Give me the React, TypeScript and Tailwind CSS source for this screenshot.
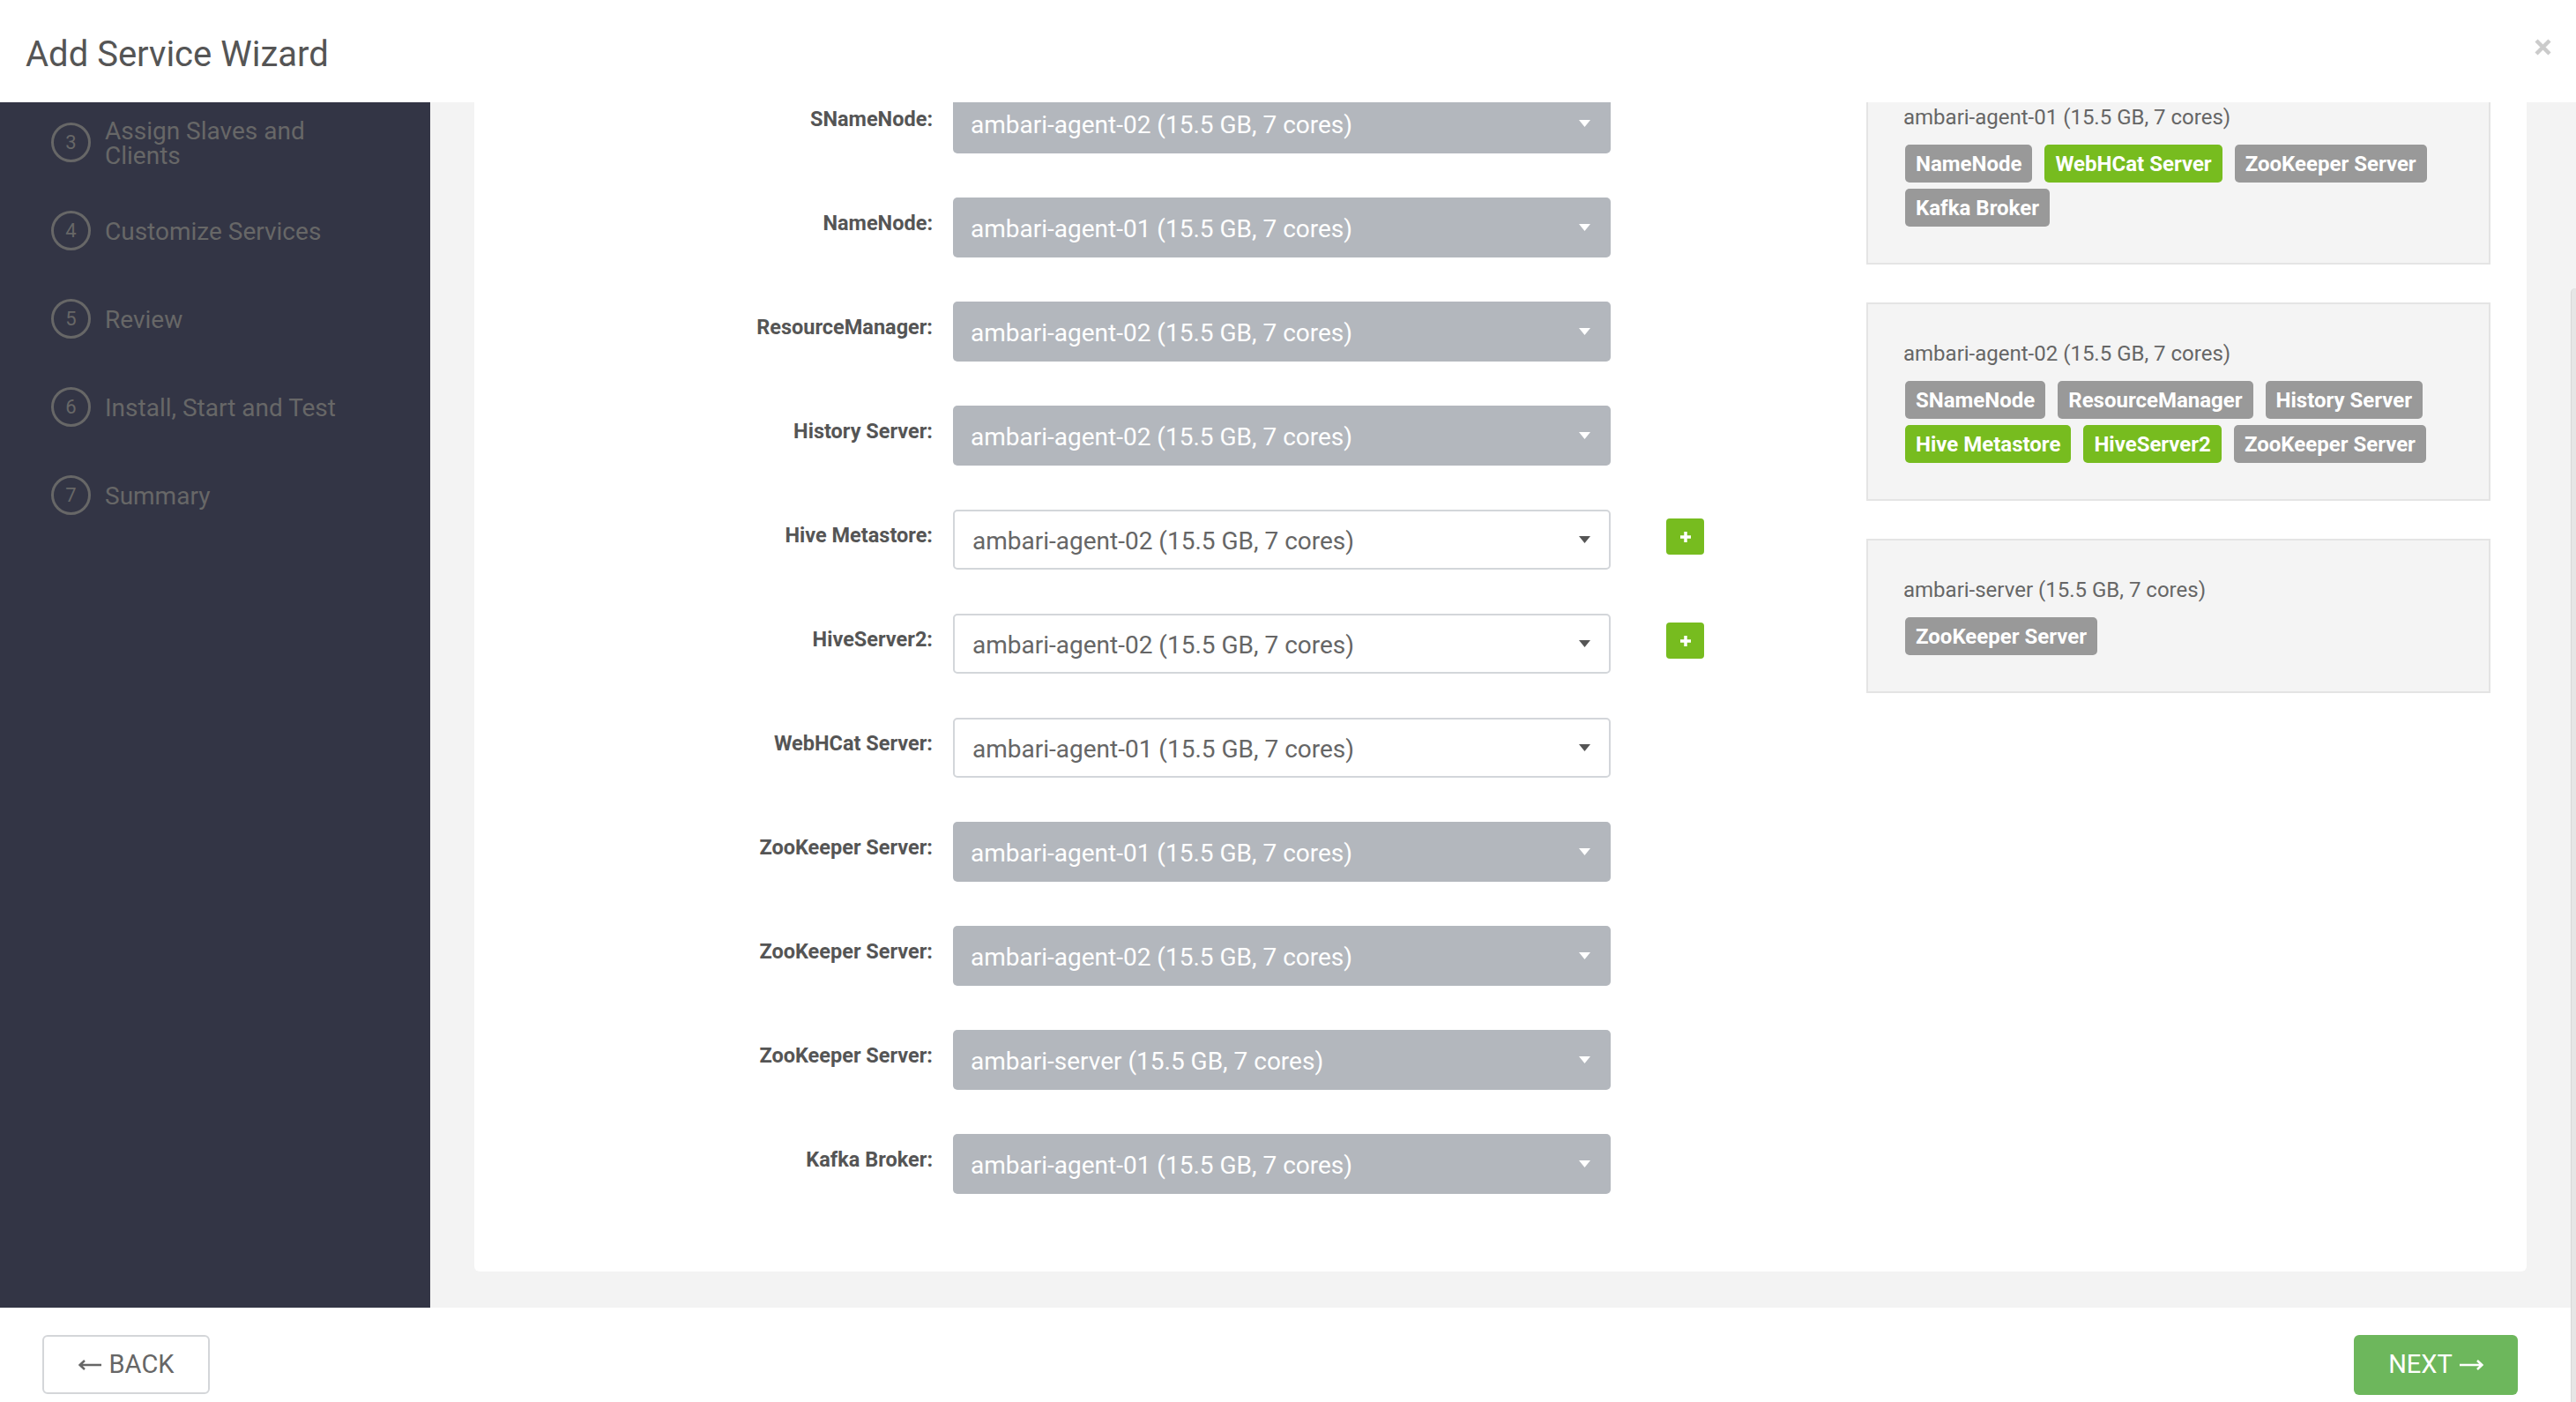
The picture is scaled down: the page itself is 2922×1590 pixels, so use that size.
import React from 'react';

type Row = { label: string; host: string; locked: boolean; plus?: boolean };

const rows: Row[] = [
  { label: 'SNameNode:', host: 'ambari-agent-02', locked: true },
  { label: 'NameNode:', host: 'ambari-agent-01', locked: true },
  { label: 'ResourceManager:', host: 'ambari-agent-02', locked: true },
  { label: 'History Server:', host: 'ambari-agent-02', locked: true },
  { label: 'Hive Metastore:', host: 'ambari-agent-02', locked: false, plus: true },
  { label: 'HiveServer2:', host: 'ambari-agent-02', locked: false, plus: true },
  { label: 'WebHCat Server:', host: 'ambari-agent-01', locked: false },
  { label: 'ZooKeeper Server:', host: 'ambari-agent-01', locked: true },
  { label: 'ZooKeeper Server:', host: 'ambari-agent-02', locked: true },
  { label: 'ZooKeeper Server:', host: 'ambari-server', locked: true },
  { label: 'Kafka Broker:', host: 'ambari-agent-01', locked: true },
];

type Badge = { name: string; isNew?: boolean };

const hosts: { name: string; rows: Badge[][] }[] = [
  {
    name: 'ambari-agent-01',
    rows: [
      [{ name: 'NameNode' }, { name: 'WebHCat Server', isNew: true }, { name: 'ZooKeeper Server' }],
      [{ name: 'Kafka Broker' }],
    ],
  },
  {
    name: 'ambari-agent-02',
    rows: [
      [{ name: 'SNameNode' }, { name: 'ResourceManager' }, { name: 'History Server' }],
      [{ name: 'Hive Metastore', isNew: true }, { name: 'HiveServer2', isNew: true }, { name: 'ZooKeeper Server' }],
    ],
  },
  {
    name: 'ambari-server',
    rows: [[{ name: 'ZooKeeper Server' }]],
  },
];

const steps = [
  { n: 3, text: ['Assign Slaves and', 'Clients'] },
  { n: 4, text: ['Customize Services'] },
  { n: 5, text: ['Review'] },
  { n: 6, text: ['Install, Start and Test'] },
  { n: 7, text: ['Summary'] },
];

const Caret = ({ color }: { color: string }) => (
  <svg width="13" height="8" viewBox="0 0 13 8">
    <path d="M0 0 L13 0 L6.5 8 Z" fill={color} />
  </svg>
);

const HostSelect = ({ row }: { row: Row }) => {
  const text = `${row.host} (15.5 GB, 7 cores)`;
  if (row.locked) {
    return (
      <div className="w-[746px] h-[68px] rounded-[5px] bg-[#b3b7bd] flex items-center justify-between pl-[20px] pr-[23px]">
        <span className="text-[28px] text-white pt-[3px]">{text}</span>
        <Caret color="#ffffff" />
      </div>
    );
  }
  return (
    <div className="w-[746px] h-[68px] rounded-[5px] bg-white border-2 border-[#d3d6da] flex items-center justify-between pl-[20px] pr-[21px]">
      <span className="text-[28px] text-[#666666] pt-[4px]">{text}</span>
      <Caret color="#555555" />
    </div>
  );
};

const App = () => {
  return (
    <div className="w-[2922px] h-[1590px] bg-white relative overflow-hidden font-['Roboto','Liberation_Sans',sans-serif]">
      <header className="h-[116px] flex justify-between pl-[29px] pr-[28px]">
        <h1 className="pt-[38px] text-[40px] leading-[47px] text-[#555555]">Add Service Wizard</h1>
        <svg className="mt-[44px]" width="19" height="19" viewBox="0 0 19 19">
          <path d="M2 2 L17 17 M17 2 L2 17" stroke="#cbcbcb" strokeWidth="4.5" />
        </svg>
      </header>

      <div className="flex h-[1367px]">
        <aside className="w-[488px] shrink-0 bg-[#333545] overflow-hidden">
          <div className="-mt-[5px] flex flex-col">
            {steps.map(s => (
              <div key={s.n} className="h-[100px] flex items-center pl-[58px] gap-[16px]">
                <div className="w-[45px] h-[45px] shrink-0 rounded-full border-[3px] border-[#676767] flex items-center justify-center text-[22px] text-[#676767]">
                  {s.n}
                </div>
                <div className="w-[320px] text-[28px] leading-[28px] text-[#676767] pt-[3px]">
                  {s.text.map(t => (
                    <div key={t}>{t}</div>
                  ))}
                </div>
              </div>
            ))}
          </div>
        </aside>

        <main className="flex-1 bg-[#f3f3f3] pl-[50px] pr-[56px] pb-[41px]">
          <div className="h-full bg-white rounded-b-[6px] overflow-hidden">
            <div className="-mt-[41px] flex">
              <div className="pt-[31px] flex flex-col gap-[50px]">
                {rows.map((row, i) => (
                  <div key={i} className="flex items-start h-[68px]">
                    <div className="w-[520px] text-right pt-[15px] text-[23.5px] leading-[28px] font-bold text-[#555555]">
                      {row.label}
                    </div>
                    <div className="ml-[23px]">
                      <HostSelect row={row} />
                    </div>
                    {row.plus && (
                      <div className="ml-[63px] mt-[10px] w-[43px] h-[41px] rounded-[4px] bg-[#77bc1f] flex items-center justify-center">
                        <svg width="12" height="12" viewBox="0 0 12 12">
                          <path d="M6 0 V12 M0 6 H12" stroke="#ffffff" strokeWidth="3.5" />
                        </svg>
                      </div>
                    )}
                  </div>
                ))}
              </div>

              <div className="ml-auto mr-[41px] w-[708px] flex flex-col gap-[43px]">
                {hosts.map(h => (
                  <div key={h.name} className="border-2 border-[#e4e4e4] bg-[#f4f4f4] pt-[42px] pb-[41px] pl-[40px]">
                    <div className="text-[24px] leading-[28px] text-[#666666]">{h.name} (15.5 GB, 7 cores)</div>
                    <div className="mt-[17px] flex flex-col gap-[7px] pl-[2px]">
                      {h.rows.map((r, ri) => (
                        <div key={ri} className="flex gap-[14px]">
                          {r.map(b => (
                            <span
                              key={b.name}
                              className={
                                b.isNew
                                  ? 'h-[43px] px-[12px] rounded-[5px] bg-[#77bc1f] text-white text-[24px] font-bold flex items-center'
                                  : 'h-[43px] px-[12px] rounded-[5px] bg-[#999999] text-white text-[24px] font-bold flex items-center'
                              }
                            >
                              {b.name}
                            </span>
                          ))}
                        </div>
                      ))}
                    </div>
                  </div>
                ))}
              </div>
            </div>
          </div>
        </main>
      </div>

      <footer className="h-[107px] flex items-start justify-between pt-[31px] pl-[48px] pr-[66px]">
        <button className="w-[190px] h-[67px] border-2 border-[#d4d6d9] rounded-[6px] flex items-center justify-center gap-[9px] text-[29px] text-[#666666]">
          <svg width="26" height="12" viewBox="0 0 26 12">
            <path d="M26 6 H2 M7 1 L1.5 6 L7 11" stroke="#666666" strokeWidth="2.5" fill="none" />
          </svg>
          BACK
        </button>
        <button className="w-[186px] h-[68px] bg-[#6db75c] rounded-[6px] flex items-center justify-center gap-[8px] text-[29px] text-white">
          NEXT
          <svg width="27" height="12" viewBox="0 0 27 12">
            <path d="M0 6 H25 M20 1 L25.5 6 L20 11" stroke="#ffffff" strokeWidth="2.5" fill="none" />
          </svg>
        </button>
      </footer>

      <div className="absolute right-0 top-[327px] bottom-0 w-[6px] bg-[#e6e6e6] border-l border-[#d8d8d8] rounded-tl-[5px]" />
    </div>
  );
};

export default App;
